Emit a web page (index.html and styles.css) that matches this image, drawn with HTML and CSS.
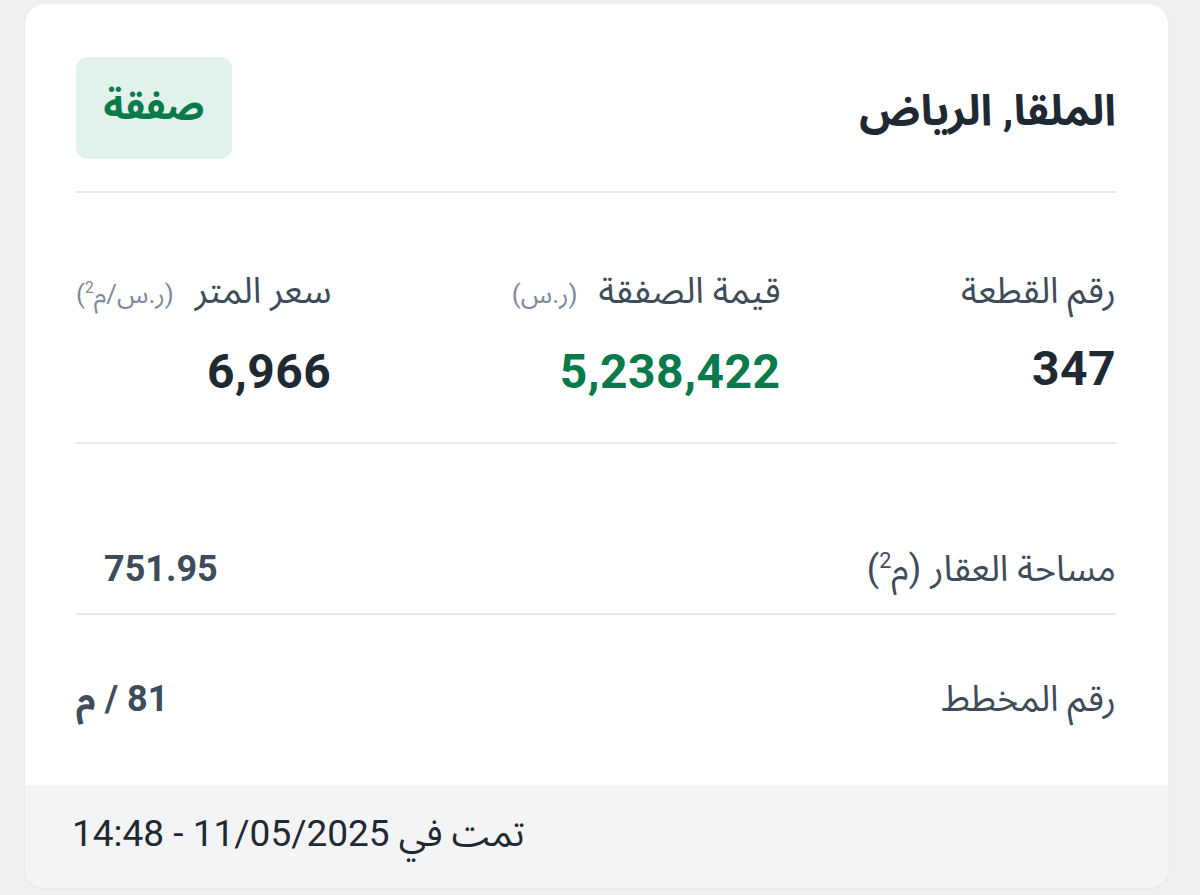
FILE: index.html
```html
<!DOCTYPE html>
<html lang="ar" dir="rtl">
<head>
<meta charset="utf-8">
<title>صفقة</title>
<link rel="stylesheet" href="styles.css">
</head>
<body>
<div class="card">
  <div class="content">
    <div class="header">
      <h1 class="title">الملقا, الرياض</h1>
      <div class="badge">صفقة</div>
    </div>
    <div class="stats">
      <div class="stat">
        <div class="label">رقم القطعة</div>
        <div class="value">347</div>
      </div>
      <div class="stat">
        <div class="label">قيمة الصفقة <span class="unit">(ر.س)</span></div>
        <div class="value green">5,238,422</div>
      </div>
      <div class="stat">
        <div class="label">سعر المتر <span class="unit">(ر.س/م<sup>2</sup>)</span></div>
        <div class="value">6,966</div>
      </div>
    </div>
    <div class="row row-area">
      <div class="label">مساحة العقار (م<sup>2</sup>)</div>
      <div class="row-value area-value">751.95</div>
    </div>
    <div class="row row-plan">
      <div class="label">رقم المخطط</div>
      <div class="row-value">81 / م</div>
    </div>
  </div>
  <div class="footer">
    <div class="footer-text">تمت في 11/05/2025 - 14:48</div>
  </div>
</div>
</body>
</html>
```

FILE: styles.css
```css
* { box-sizing: border-box; }
html, body { margin: 0; padding: 0; }
body {
  background: #efefef;
  font-family: Roboto, "Noto Sans Arabic", "Noto Kufi Arabic", "DejaVu Sans", sans-serif;
  color: #1f2933;
  width: 1200px;
  height: 895px;
  overflow: hidden;
}
.card {
  margin: 4px 32px 0 25px;
  width: 1143px;
  height: 884px;
  background: #ffffff;
  border-radius: 20px;
  overflow: hidden;
  display: flex;
  flex-direction: column;
  box-shadow: 0 1px 3px rgba(0,0,0,0.05);
}
.content {
  flex: 1;
  padding: 0 52px 0 51px;
}
.header {
  display: flex;
  justify-content: space-between;
  align-items: center;
  padding: 53px 0 32px;
  border-bottom: 2px solid #e4e9f0;
}
.title {
  margin: 0 0 -6px;
  font-size: 43px;
  font-weight: 700;
  color: #1f2933;
  line-height: 1.2;
}
.badge {
  width: 156px;
  height: 102px;
  border-radius: 12px;
  background: #e0f2ea;
  color: #0b7a4b;
  font-size: 39px;
  font-weight: 700;
  display: flex;
  align-items: center;
  justify-content: center;
  padding-bottom: 4px;
}
.stats {
  display: flex;
  justify-content: space-between;
  padding: 78px 0 42px;
  border-bottom: 2px solid #e4e9f0;
}
.stat {
  display: flex;
  flex-direction: column;
  gap: 30px;
}
.label {
  font-size: 36px;
  line-height: 40px;
  color: #3e4c59;
  white-space: nowrap;
}
.unit {
  font-size: 26px;
  color: #7d8a9c;
  margin-right: 12px;
}
sup {
  font-size: 0.6em;
  line-height: 0;
}
.value {
  font-size: 48px;
  line-height: 56px;
  font-weight: 700;
  color: #1f2933;
  letter-spacing: 0.5px;
}
.value.green { color: #087a4b; }
.row {
  display: flex;
  justify-content: space-between;
  align-items: center;
}
.row-area {
  padding: 105px 0 24px;
  border-bottom: 2px solid #e4e9f0;
}
.row-plan {
  padding: 64px 0 66px;
}
.row-value {
  font-size: 36px;
  font-weight: 700;
  color: #3e4c59;
  line-height: 40px;
}
.area-value { padding-left: 28px; }
.footer {
  height: 105px;
  background: #f3f4f6;
  display: flex;
  align-items: center;
  justify-content: flex-end;
  padding: 0 47px 6px;
}
.footer-text {
  font-size: 37px;
  color: #1f2933;
}
```
